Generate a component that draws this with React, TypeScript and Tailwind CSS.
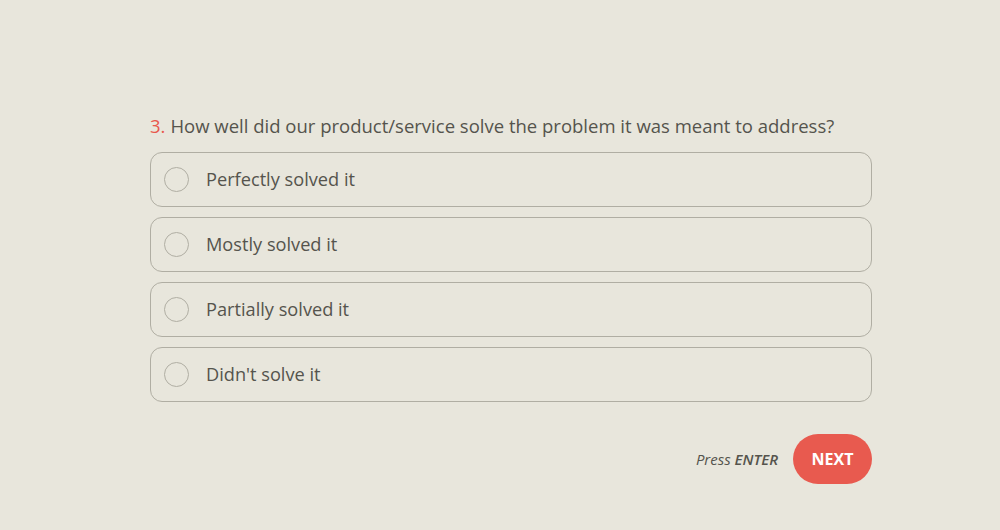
import React from "react";

const options = ["Perfectly solved it", "Mostly solved it", "Partially solved it", "Didn't solve it"];

export default function App() {
  return (
    <div
      className="w-[1000px] h-[530px] bg-[#e8e6dc] text-[#55544d]"
      style={{ fontFamily: '"Open Sans", sans-serif' }}
    >
      <div className="w-[722px] ml-[150px] pt-[114px]">
        <div className="text-[18.5px] leading-[24px] flex">
          <span className="text-[#e8584d] mr-[5px]">3.</span>
          <span>How well did our product/service solve the problem it was meant to address?</span>
        </div>
        <div className="mt-[14px] flex flex-col gap-[10px]">
          {options.map((o) => (
            <div
              key={o}
              className="h-[55px] rounded-[12px] border border-[#b0aea3] flex items-center pl-[13px]"
            >
              <div className="w-[25px] h-[25px] rounded-full border border-[#b0aea3]" />
              <span className="ml-[17px] text-[18.2px]">{o}</span>
            </div>
          ))}
        </div>
        <div className="mt-[32px] flex justify-end items-center">
          <span className="italic text-[15px] text-[#55544d] mr-[15px]">
            Press <span className="font-semibold">ENTER</span>
          </span>
          <div className="w-[79px] h-[50px] rounded-full bg-[#e85a4f] text-white font-bold text-[16px] flex items-center justify-center">
            NEXT
          </div>
        </div>
      </div>
    </div>
  );
}
